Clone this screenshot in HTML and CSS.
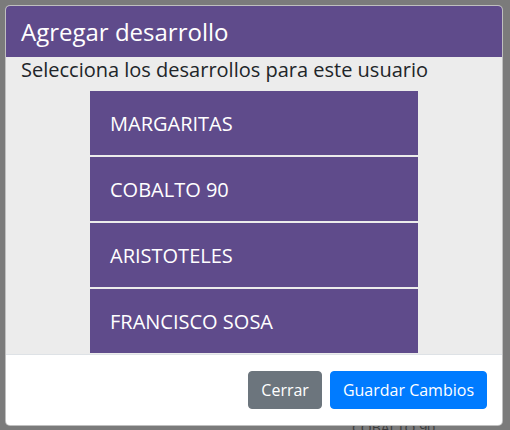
FILE: index.html
```html
<!DOCTYPE html>
<html lang="es">
<head>
    <meta charset="UTF-8">
    <meta name="viewport" content="width=device-width, initial-scale=1.0">
    <title>Agregar desarrollo</title>
    <link rel="stylesheet" href="styles.css">
</head>
<body>
    <div class="page-behind">
        <span class="behind-text">COBALTO 90</span>
    </div>

    <div class="modal">
        <div class="modal-header">
            <h5 class="modal-title">Agregar desarrollo</h5>
        </div>
        <div class="modal-body">
            <p class="hint">Selecciona los desarrollos para este usuario</p>
            <ul class="dev-list">
                <li class="dev-item">MARGARITAS</li>
                <li class="dev-item">COBALTO 90</li>
                <li class="dev-item">ARISTOTELES</li>
                <li class="dev-item">FRANCISCO SOSA</li>
            </ul>
        </div>
        <div class="modal-footer">
            <button type="button" class="btn btn-secondary">Cerrar</button>
            <button type="button" class="btn btn-primary">Guardar Cambios</button>
        </div>
    </div>
</body>
</html>
```

FILE: styles.css
```css
body {
    margin: 0;
    font-family: "Open Sans", "Liberation Sans", sans-serif;
    background-color: #7b7b7b;
    color: #212529;
    height: 430px;
    overflow: hidden;
    position: relative;
}
.page-behind {
    position: absolute;
    left: 0;
    top: 0;
    width: 510px;
    height: 430px;
}
.behind-text {
    position: absolute;
    left: 352px;
    top: 418px;
    font-size: 14px;
    color: #3a3a3a;
}
.modal {
    position: relative;
    margin: 5px;
    width: 496px;
    border: 1px solid rgba(0, 0, 0, 0.25);
    border-radius: 5px;
    overflow: hidden;
    background-color: white;
}
.modal-header {
    background-color: #5f4b8b;
    color: white;
    height: 51px;
    padding: 0 15px;
    display: flex;
    align-items: center;
}
.modal-title {
    margin: 0;
    font-size: 24px;
    font-weight: normal;
    line-height: 1.5;
}
.modal-body {
    background-color: #ececec;
    height: 297px;
    padding: 0 15px;
    overflow: hidden;
}
.hint {
    margin: 0;
    padding-top: 1px;
    font-size: 20px;
    line-height: 24px;
}
.dev-list {
    list-style: none;
    margin: 9px auto 0;
    padding: 0;
    width: 328px;
}
.dev-item {
    background-color: #5f4b8b;
    color: white;
    height: 64px;
    margin-bottom: 2px;
    padding-left: 20px;
    display: flex;
    align-items: center;
    font-size: 20px;
}
.modal-footer {
    border-top: 1px solid #dee2e6;
    padding: 16px 15px;
    display: flex;
    justify-content: flex-end;
    gap: 8px;
}
.btn {
    font-family: inherit;
    font-size: 16px;
    line-height: 24px;
    padding: 6px 12px;
    border: 1px solid transparent;
    border-radius: 4px;
    color: white;
    cursor: pointer;
}
.btn-secondary {
    background-color: #6c757d;
    border-color: #6c757d;
}
.btn-primary {
    background-color: #007bff;
    border-color: #007bff;
}
```
